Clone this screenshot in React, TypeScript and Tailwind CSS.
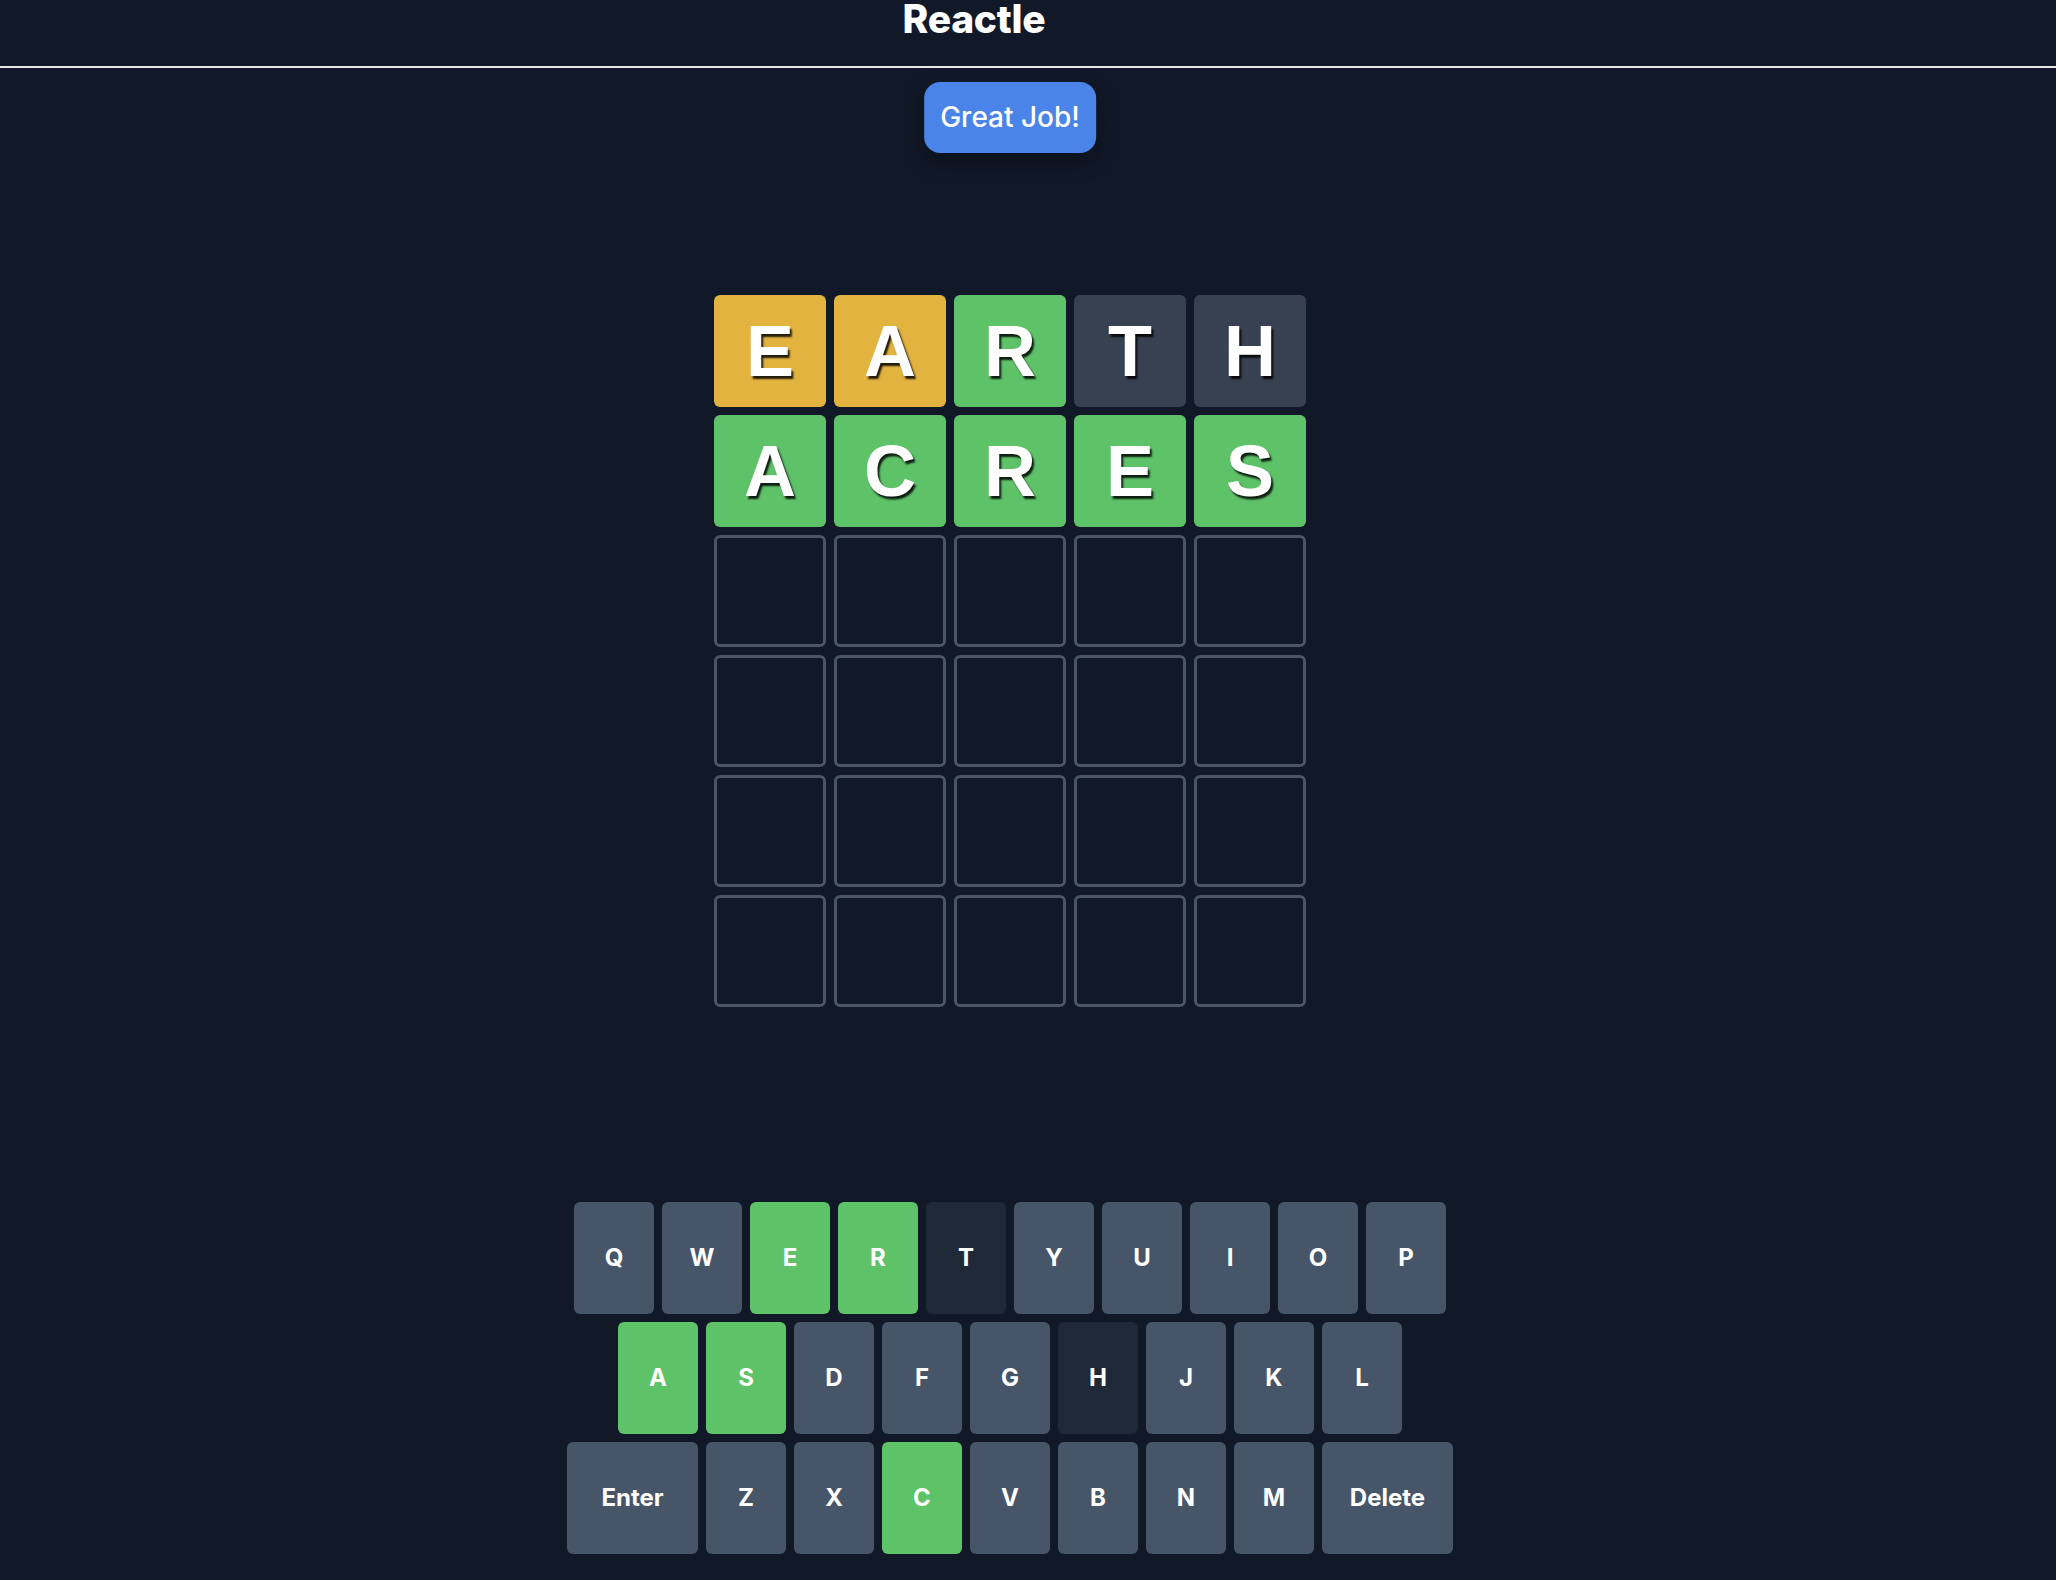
import React from "react";

type S = "correct" | "present" | "absent" | "empty";

const rows: { l: string; s: S }[][] = [
  [
    { l: "E", s: "present" },
    { l: "A", s: "present" },
    { l: "R", s: "correct" },
    { l: "T", s: "absent" },
    { l: "H", s: "absent" },
  ],
  [
    { l: "A", s: "correct" },
    { l: "C", s: "correct" },
    { l: "R", s: "correct" },
    { l: "E", s: "correct" },
    { l: "S", s: "correct" },
  ],
];

function Tile({ l, s }: { l?: string; s: S }) {
  const cls =
    s === "correct"
      ? "bg-[#5ec269]"
      : s === "present"
      ? "bg-[#e2b33f]"
      : s === "absent"
      ? "bg-[#374151]"
      : "border-[3px] border-[#4a5568]";
  return (
    <div
      className={`w-[112px] h-[112px] rounded-[6px] flex items-center justify-center text-white text-[72px] font-bold leading-none [text-shadow:2px_3px_2px_rgba(0,0,0,0.85)] ${cls}`}
      style={{ fontFamily: '"Liberation Sans", Arial, sans-serif' }}
    >
      {l}
    </div>
  );
}

const keyState: Record<string, string> = {
  E: "correct",
  R: "correct",
  A: "correct",
  S: "correct",
  C: "correct",
  T: "absent",
  H: "absent",
};

function Key({ k, wide }: { k: string; wide?: boolean }) {
  const st = keyState[k];
  const bg =
    st === "correct" ? "bg-[#5ec269]" : st === "absent" ? "bg-[#1f2937]" : "bg-[#475569]";
  return (
    <div
      className={`${wide ? "w-[131px]" : "w-[80px]"} h-[112px] rounded-[6px] flex items-center justify-center text-white text-[24px] font-bold ${bg}`}
    >
      {k}
    </div>
  );
}

export default function App() {
  const kb = [
    ["Q", "W", "E", "R", "T", "Y", "U", "I", "O", "P"],
    ["A", "S", "D", "F", "G", "H", "J", "K", "L"],
  ];
  return (
    <div
      className="min-h-screen w-full bg-[#111827] overflow-hidden"
      style={{ fontFamily: 'Inter, "Noto Sans", sans-serif' }}
    >
      <header className="h-[68px] border-b-2 border-[#e5e7eb] flex justify-center">
        <h1 className="mr-[108px] -mt-[1px] text-white text-[39px] leading-[40px] font-extrabold tracking-[-0.3px]">
          Reactle
        </h1>
      </header>
      <main className="relative w-[2020px] flex flex-col items-center">
        <div className="absolute top-[14px] left-1/2 -translate-x-1/2 bg-[#4a84e9] text-white text-[28px] leading-[39px] font-medium px-4 py-4 rounded-[16px] shadow-[0_8px_20px_rgba(0,0,0,0.35)] whitespace-nowrap">
          Great Job!
        </div>
        <div className="mt-[227px] flex flex-col gap-[8px]">
          {rows.map((r, i) => (
            <div key={i} className="flex gap-[8px]">
              {r.map((t, j) => (
                <Tile key={j} l={t.l} s={t.s} />
              ))}
            </div>
          ))}
          {[0, 1, 2, 3].map((i) => (
            <div key={"e" + i} className="flex gap-[8px]">
              {[0, 1, 2, 3, 4].map((j) => (
                <Tile key={j} s="empty" />
              ))}
            </div>
          ))}
        </div>
        <div className="mt-[195px] flex flex-col items-center gap-[8px]">
          {kb.map((row, i) => (
            <div key={i} className="flex gap-[8px]">
              {row.map((k) => (
                <Key key={k} k={k} />
              ))}
            </div>
          ))}
          <div className="flex gap-[8px]">
            <Key k="Enter" wide />
            {["Z", "X", "C", "V", "B", "N", "M"].map((k) => (
              <Key key={k} k={k} />
            ))}
            <Key k="Delete" wide />
          </div>
        </div>
      </main>
    </div>
  );
}
